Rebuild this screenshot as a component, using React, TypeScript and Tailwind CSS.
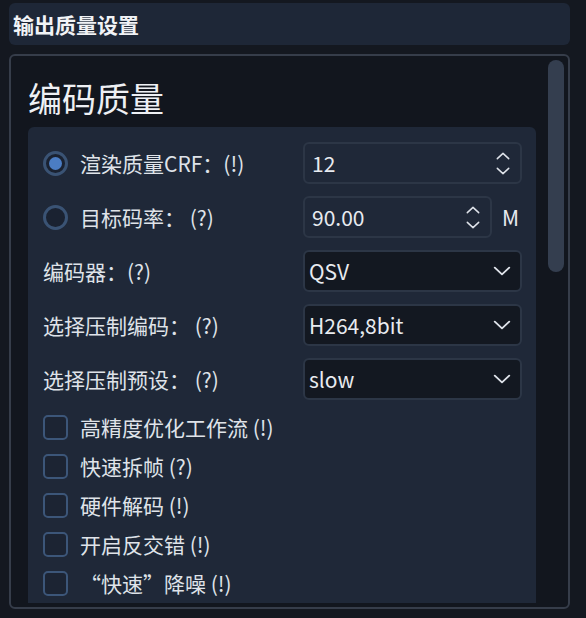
import React from 'react';

const font = { fontFamily: '"Noto Sans CJK SC", "Open Sans", sans-serif' };

function Chevron({ up = false, className = '' }: { up?: boolean; className?: string }) {
  return (
    <svg viewBox="0 0 16 9" className={className} fill="none" stroke="#dfe3ea" strokeWidth="1.7" strokeLinecap="round" strokeLinejoin="round">
      {up ? <polyline points="1.5,7.5 8,1.5 14.5,7.5" /> : <polyline points="1.5,1.5 8,7.5 14.5,1.5" />}
    </svg>
  );
}

function SpinBox({ value, className = '' }: { value: string; className?: string }) {
  return (
    <div className={`h-[42px] border-2 border-[#2c3646] rounded-md flex items-center pl-[7px] pr-[10px] ${className}`}>
      <span className="flex-1 text-[21px] leading-none text-[#e8ebf0]">{value}</span>
      <div className="flex flex-col items-center gap-[7px]">
        <Chevron up className="w-[14px] h-[8px]" />
        <Chevron className="w-[14px] h-[8px]" />
      </div>
    </div>
  );
}

function Combo({ value }: { value: string }) {
  return (
    <div className="h-[42px] bg-[#131821] border-2 border-[#2c3646] rounded-md flex items-center pl-[4px] pr-[9px]">
      <span className="flex-1 text-[21px] leading-none text-[#e8ebf0]">{value}</span>
      <Chevron className="w-[18px] h-[10px]" />
    </div>
  );
}

function Radio({ checked }: { checked?: boolean }) {
  return (
    <div className="w-[25px] h-[25px] rounded-full border-[3px] border-[#3a5374] bg-[#1a2231] flex items-center justify-center shrink-0">
      {checked && <div className="w-[13px] h-[13px] rounded-full bg-[#4b7dc4]" />}
    </div>
  );
}

function Check() {
  return <div className="w-[25px] h-[25px] rounded-[5px] border-2 border-[#3c5679] bg-[#1c2433] shrink-0" />;
}

export default function App() {
  const rowLabel = 'text-[21px] leading-none text-[#dfe3e9] whitespace-nowrap';

  const checks = [
    '高精度优化工作流 (!)',
    '快速拆帧 (?)',
    '硬件解码 (!)',
    '开启反交错 (!)',
    '“快速”降噪 (!)',
  ];

  return (
    <div style={font} className="w-[586px] h-[618px] bg-[#141820] pl-[9px] pr-[16px] pt-[3px] flex flex-col overflow-hidden">
      {/* Group header */}
      <div className="h-[42px] bg-[#1e2737] rounded-md flex items-center px-[4px]">
        <span className="text-[21px] font-bold leading-none text-[#f1f3f6]">输出质量设置</span>
      </div>

      {/* Scroll panel */}
      <div className="mt-[9px] h-[555px] border-2 border-[#363d4a] rounded-md bg-[#12161e] flex">
        <div className="flex-1 flex flex-col pb-[4px] pl-[17px] pr-[12px] min-w-0">
          <div className="flex-1 overflow-hidden">
            <div className="h-[71px] pt-[12px] flex items-center">
              <span className="text-[34px] leading-none text-[#eef0f4]">编码质量</span>
            </div>

            <div className="bg-[#1f2838] rounded-t-md pl-[15px] pr-[14px] pt-[15px] pb-[40px]">
              <div className="grid grid-cols-[260px_1fr] gap-y-[12px] items-center">
                <div className="flex items-center gap-[12px]">
                  <Radio checked />
                  <span className={rowLabel}>渲染质量CRF：(!)</span>
                </div>
                <SpinBox value="12" />

                <div className="flex items-center gap-[12px]">
                  <Radio />
                  <span className={rowLabel}>目标码率： (?)</span>
                </div>
                <div className="flex items-center gap-[10px]">
                  <SpinBox value="90.00" className="flex-1" />
                  <span className="text-[21px] leading-none text-[#e8ebf0] w-[20px]">M</span>
                </div>

                <span className={rowLabel}>编码器：(?)</span>
                <Combo value="QSV" />

                <span className={rowLabel}>选择压制编码： (?)</span>
                <Combo value="H264,8bit" />

                <span className={rowLabel}>选择压制预设： (?)</span>
                <Combo value="slow" />
              </div>

              <div className="mt-[15px] flex flex-col gap-[14px]">
                {checks.map(c => (
                  <div key={c} className="flex items-center gap-[12px]">
                    <Check />
                    <span className={rowLabel}>{c}</span>
                  </div>
                ))}
              </div>
            </div>
          </div>
        </div>

        {/* Scrollbar */}
        <div className="w-[20px] shrink-0 pt-[4px]">
          <div className="w-[16px] h-[212px] rounded-full bg-[#343e4f]" />
        </div>
      </div>
    </div>
  );
}
